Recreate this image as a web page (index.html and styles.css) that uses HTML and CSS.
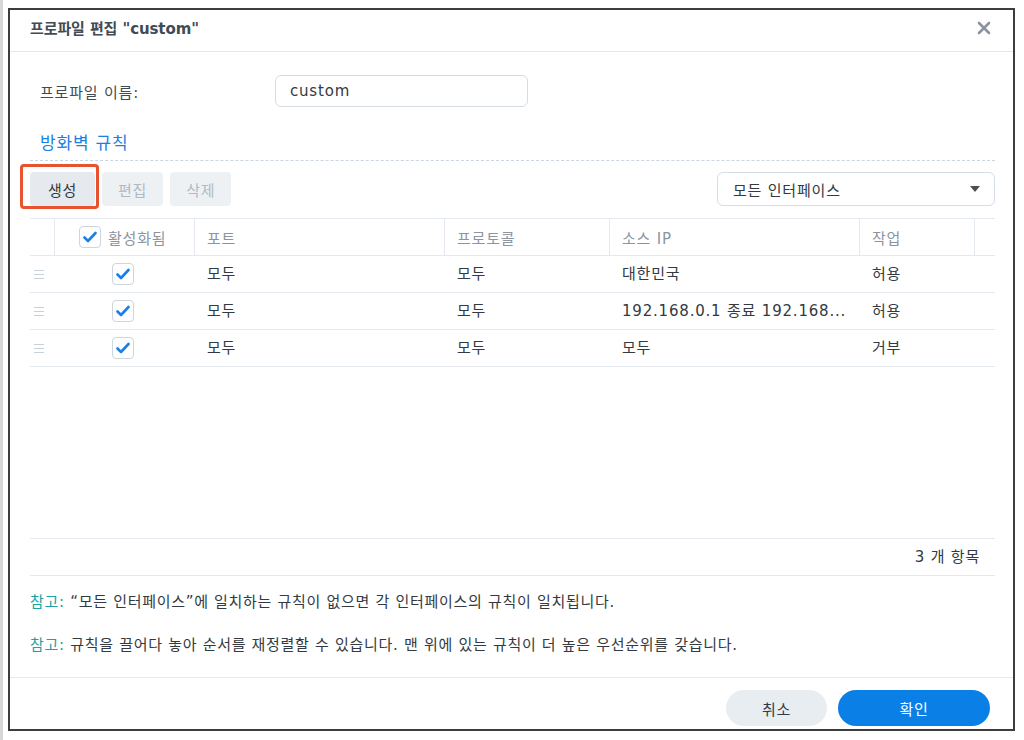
FILE: index.html
```html
<!DOCTYPE html>
<html lang="ko">
<head>
  <meta charset="UTF-8">
  <title>프로파일 편집</title>
  <link rel="stylesheet" href="styles.css">
</head>
<body>

  <!-- Dialog -->
  <div class="dialog">
    <div class="dialog-header">
      <span class="dialog-title">프로파일 편집 "custom"</span>
      <svg class="close" width="14" height="14" viewBox="0 0 14 14">
        <path d="M2 2 L12 12 M12 2 L2 12" stroke="#8b949d" stroke-width="2.6" stroke-linecap="round"/>
      </svg>
    </div>

    <div class="dialog-body">
      <!-- Profile name -->
      <div class="name-row">
        <label class="name-label">프로파일 이름:</label>
        <div class="text-input">custom</div>
      </div>

      <div class="section-title">방화벽 규칙</div>

      <!-- Toolbar -->
      <div class="toolbar">
        <div class="btn-group">
          <button class="btn btn-create">생성</button>
          <button class="btn disabled">편집</button>
          <button class="btn disabled">삭제</button>
        </div>
        <div class="select">
          <span>모든 인터페이스</span>
          <span class="caret"></span>
        </div>
      </div>

      <!-- Rules table -->
      <div class="grid">
        <div class="grid-row grid-head">
          <div class="cell"></div>
          <div class="cell cell-check"><span class="checkbox"><svg width="14" height="12" viewBox="0 0 14 12"><path d="M1.5 6.5 L5 10 L12.5 2" fill="none" stroke="#1a7fe6" stroke-width="2.6" stroke-linecap="round" stroke-linejoin="round"/></svg></span>활성화됨</div>
          <div class="cell">포트</div>
          <div class="cell">프로토콜</div>
          <div class="cell">소스 IP</div>
          <div class="cell">작업</div>
          <div class="cell last"></div>
        </div>

        <div class="grid-body">
          <div class="grid-row">
            <div class="cell drag"><span class="handle"></span></div>
            <div class="cell center"><span class="checkbox"><svg width="14" height="12" viewBox="0 0 14 12"><path d="M1.5 6.5 L5 10 L12.5 2" fill="none" stroke="#1a7fe6" stroke-width="2.6" stroke-linecap="round" stroke-linejoin="round"/></svg></span></div>
            <div class="cell">모두</div>
            <div class="cell">모두</div>
            <div class="cell">대한민국</div>
            <div class="cell">허용</div>
            <div class="cell"></div>
          </div>
          <div class="grid-row">
            <div class="cell drag"><span class="handle"></span></div>
            <div class="cell center"><span class="checkbox"><svg width="14" height="12" viewBox="0 0 14 12"><path d="M1.5 6.5 L5 10 L12.5 2" fill="none" stroke="#1a7fe6" stroke-width="2.6" stroke-linecap="round" stroke-linejoin="round"/></svg></span></div>
            <div class="cell">모두</div>
            <div class="cell">모두</div>
            <div class="cell">192.168.0.1 종료 192.168...</div>
            <div class="cell">허용</div>
            <div class="cell"></div>
          </div>
          <div class="grid-row">
            <div class="cell drag"><span class="handle"></span></div>
            <div class="cell center"><span class="checkbox"><svg width="14" height="12" viewBox="0 0 14 12"><path d="M1.5 6.5 L5 10 L12.5 2" fill="none" stroke="#1a7fe6" stroke-width="2.6" stroke-linecap="round" stroke-linejoin="round"/></svg></span></div>
            <div class="cell">모두</div>
            <div class="cell">모두</div>
            <div class="cell">모두</div>
            <div class="cell">거부</div>
            <div class="cell"></div>
          </div>
        </div>

        <div class="grid-count">3 개 항목</div>
      </div>

      <!-- Notes -->
      <p class="note"><span class="note-label">참고:</span> “모든 인터페이스”에 일치하는 규칙이 없으면 각 인터페이스의 규칙이 일치됩니다.</p>
      <p class="note"><span class="note-label">참고:</span> 규칙을 끌어다 놓아 순서를 재정렬할 수 있습니다. 맨 위에 있는 규칙이 더 높은 우선순위를 갖습니다.</p>
    </div>

    <!-- Footer -->
    <div class="dialog-footer">
      <button class="pill pill-cancel">취소</button>
      <button class="pill pill-ok">확인</button>
    </div>
  </div>

</body>
</html>
```

FILE: styles.css
```css
/* Page */
body {
  margin: 0;
  background-color: #ffffff;
  font-family: "DejaVu Sans", "Noto Sans CJK KR", sans-serif;
  font-size: 15px;
  letter-spacing: 0.8px;
  color: #414b55;
  border-left: 3px solid #d6d6d6;
  height: 740px;
  box-sizing: border-box;
}

/* Dialog frame */
.dialog {
  margin: 8px 0 0 5px;
  width: 1007px;
  height: 723px;
  box-sizing: border-box;
  border: 2px solid #3d3d3d;
  background-color: #ffffff;
  display: flex;
  flex-direction: column;
}

.dialog-header {
  height: 42px;
  border-bottom: 1px solid #e1e7ee;
  display: flex;
  align-items: center;
  justify-content: space-between;
  padding: 0 22px 6px 20px;
  box-sizing: border-box;
  flex-shrink: 0;
}

.dialog-title {
  font-weight: bold;
  font-size: 15px;
  letter-spacing: -0.1px;
  color: #414b55;
}

.dialog-body {
  padding: 0 18px 0 20px;
  flex: 1;
}

/* Profile name */
.name-row {
  display: flex;
  align-items: center;
  margin-top: 23px;
  padding-left: 10px;
}

.name-label {
  width: 235px;
}

.text-input {
  width: 253px;
  height: 32px;
  box-sizing: border-box;
  border: 1px solid #d5dce4;
  border-radius: 6px;
  padding: 0 14px;
  line-height: 30px;
  color: #333a42;
}

.section-title {
  margin-top: 26px;
  padding: 0 0 6px 10px;
  font-size: 17px;
  line-height: 21px;
  letter-spacing: 0.8px;
  color: #1a80e2;
  border-bottom: 1px dashed #cad5e0;
}

/* Toolbar */
.toolbar {
  display: flex;
  justify-content: space-between;
  margin-top: 11px;
}

.btn-group {
  display: flex;
  gap: 7px;
}

.btn {
  height: 34px;
  padding: 0 16px;
  border: none;
  border-radius: 4px;
  background-color: #e6eaef;
  font-family: inherit;
  font-size: 15px;
  letter-spacing: 0.8px;
  color: #333a42;
}

.btn.disabled {
  background-color: #eef1f4;
  color: #b1b9c2;
}

.btn-create {
  position: relative;
  width: 65px;
}

/* annotation box drawn over the create button */
.btn-create::after {
  content: "";
  position: absolute;
  left: -10px;
  right: -4px;
  top: -8px;
  bottom: -3px;
  border: 3px solid #e9522f;
  border-radius: 4px;
}

.select {
  width: 278px;
  height: 34px;
  box-sizing: border-box;
  border: 1px solid #d5dce4;
  border-radius: 6px;
  padding: 0 14px 0 15px;
  display: flex;
  align-items: center;
  justify-content: space-between;
  color: #333a42;
}

.caret {
  width: 0;
  height: 0;
  border-left: 5px solid transparent;
  border-right: 5px solid transparent;
  border-top: 6px solid #4a4f55;
}

/* Rules table */
.grid {
  margin-top: 12px;
}

.grid-row {
  display: grid;
  grid-template-columns: 20px 145px 250px 165px 250px 115px 20px;
  height: 37px;
  border-bottom: 1px solid #e4e9ef;
  box-sizing: border-box;
}

.grid-head {
  border-top: 1px solid #e4e9ef;
  height: 38px;
  color: #8c959f;
}

.grid-head .cell {
  border-right: 1px solid #e4e9ef;
}

.grid-head .cell.last {
  border-right: none;
}

.cell {
  display: flex;
  align-items: center;
  padding: 0 12px;
  white-space: nowrap;
  overflow: hidden;
  min-width: 0;
  color: inherit;
}

.grid-body .cell {
  color: #333a42;
  display: block;
  line-height: 36px;
}

.cell-check {
  padding-left: 29px;
  gap: 7px;
}

.grid-body .cell.center {
  display: flex;
  justify-content: center;
  align-items: center;
  padding: 0;
}

.grid-body .cell.drag {
  display: flex;
  align-items: center;
  padding: 0 0 0 4px;
}

.handle {
  width: 10px;
  height: 7px;
  border-top: 1px solid #c9d2db;
  border-bottom: 1px solid #c9d2db;
  position: relative;
}

.handle::after {
  content: "";
  position: absolute;
  left: 0;
  right: 0;
  top: 3px;
  border-top: 1px solid #c9d2db;
}

.checkbox {
  width: 22px;
  height: 22px;
  box-sizing: border-box;
  border: 1px solid #cdd5de;
  border-radius: 4px;
  display: inline-flex;
  align-items: center;
  justify-content: center;
  flex-shrink: 0;
}

.grid-body {
  height: 283px;
  border-bottom: 1px solid #e4e9ef;
  box-sizing: border-box;
}

.grid-count {
  height: 37px;
  line-height: 36px;
  text-align: right;
  padding-right: 15px;
  border-bottom: 1px solid #e4e9ef;
  box-sizing: border-box;
  color: #333a42;
}

/* Notes */
.note {
  margin: 16px 0 0 0;
  line-height: 20px;
  font-size: 15px;
  letter-spacing: 0.7px;
  color: #333a42;
}

.note + .note {
  margin-top: 23px;
}

.note-label {
  color: #1ba3a3;
}

/* Footer */
.dialog-footer {
  border-top: 1px solid #e4e9ef;
  height: 52px;
  box-sizing: border-box;
  display: flex;
  justify-content: flex-end;
  gap: 11px;
  padding: 12px 23px 0 0;
  flex-shrink: 0;
}

.pill {
  height: 36px;
  border: none;
  border-radius: 18px;
  font-family: inherit;
  font-size: 15px;
  letter-spacing: 0.8px;
}

.pill-cancel {
  width: 101px;
  background-color: #e8edf2;
  color: #333a42;
}

.pill-ok {
  width: 152px;
  background-color: #0a7fe6;
  color: #ffffff;
}
```
